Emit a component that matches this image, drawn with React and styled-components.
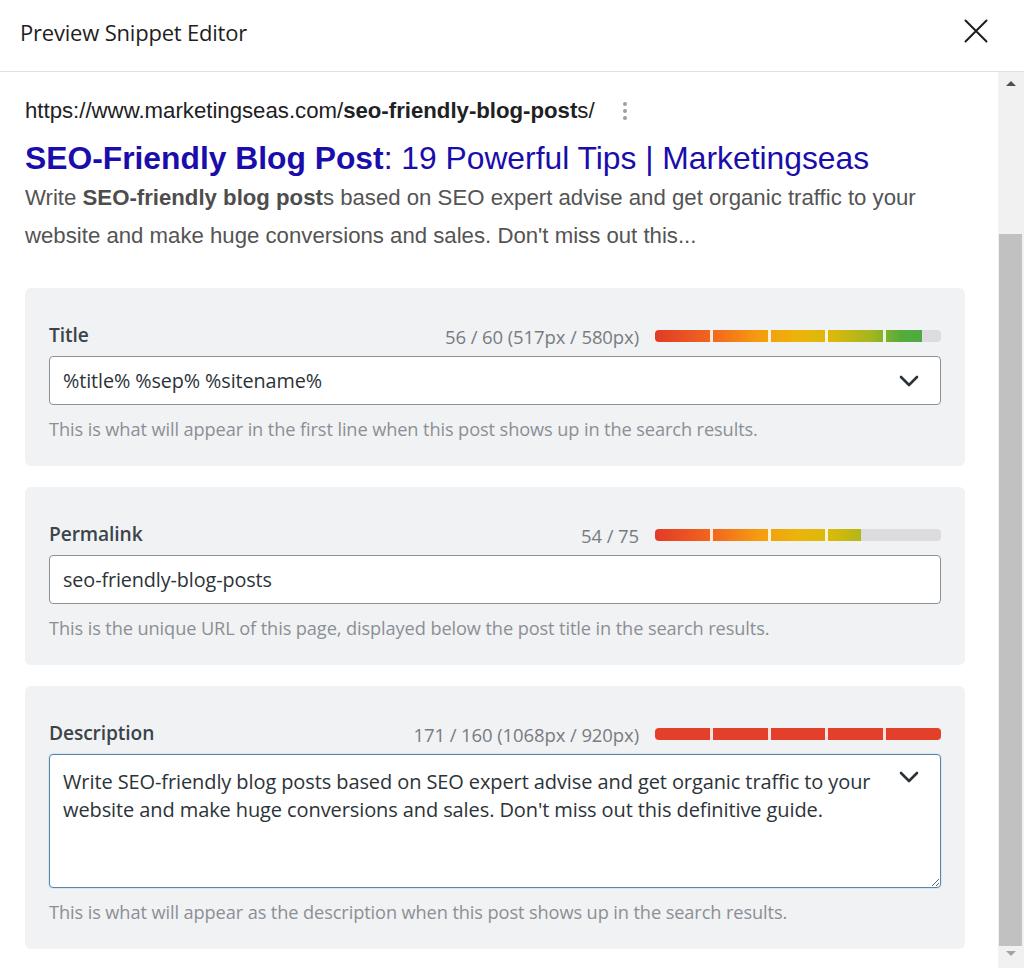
import styled, { createGlobalStyle } from 'styled-components';

const GlobalStyle = createGlobalStyle`
  html, body {
    margin: 0;
    padding: 0;
    background: #fff;
  }
  body {
    font-family: "Open Sans", "Noto Sans", sans-serif;
    color: #2c3338;
  }
  * {
    box-sizing: border-box;
  }
`;

const METER_WIDTH = 286;

const fields = [
  {
    id: 'title',
    label: 'Title',
    counter: '56 / 60 (517px / 580px)',
    value: 56,
    max: 60,
    text: '%title% %sep% %sitename%',
    help: 'This is what will appear in the first line when this post shows up in the search results.',
    chevron: true,
  },
  {
    id: 'permalink',
    label: 'Permalink',
    counter: '54 / 75',
    value: 54,
    max: 75,
    text: 'seo-friendly-blog-posts',
    help: 'This is the unique URL of this page, displayed below the post title in the search results.',
  },
  {
    id: 'description',
    label: 'Description',
    counter: '171 / 160 (1068px / 920px)',
    value: 171,
    max: 160,
    multiline: true,
    text: "Write SEO-friendly blog posts based on SEO expert advise and get organic traffic to your website and make huge conversions and sales. Don't miss out this definitive guide.",
    help: 'This is what will appear as the description when this post shows up in the search results.',
  },
];

const CloseIcon = () => (
  <svg width="24" height="24" viewBox="0 0 24 24" fill="none" stroke="#1e1e1e" strokeWidth="2" strokeLinecap="round">
    <path d="M1.5 1.5 L22.5 22.5 M22.5 1.5 L1.5 22.5" />
  </svg>
);

const Chevron = () => (
  <svg width="20" height="12" viewBox="0 0 20 12" fill="none" stroke="#2c3338" strokeWidth="2.6" strokeLinecap="round" strokeLinejoin="round">
    <path d="M2 2 L10 10 L18 2" />
  </svg>
);

const Meter = ({ value, max }) => {
  const over = value > max;
  const pct = Math.min(value / max, 1) * 100;
  return (
    <MeterTrack>
      <MeterFill $over={over} style={{ width: `${pct}%` }} />
    </MeterTrack>
  );
};

const FieldCard = ({ field }) => (
  <Card>
    <CardHeader>
      <FieldLabel>{field.label}</FieldLabel>
      <Counter>
        <CounterText>{field.counter}</CounterText>
        <Meter value={field.value} max={field.max} />
      </Counter>
    </CardHeader>
    {field.multiline ? (
      <TextAreaWrap>
        <TextArea readOnly value={field.text} />
        <AreaChevron>
          <Chevron />
        </AreaChevron>
      </TextAreaWrap>
    ) : (
      <InputBox>
        <span>{field.text}</span>
        {field.chevron && <Chevron />}
      </InputBox>
    )}
    <HelpText>{field.help}</HelpText>
  </Card>
);

const App = () => {
  return (
    <>
      <GlobalStyle />
      <Modal>
        <Header>
          <HeaderTitle>Preview Snippet Editor</HeaderTitle>
          <CloseButton aria-label="Close">
            <CloseIcon />
          </CloseButton>
        </Header>

        <Body>
          <Content>
            <Serp>
              <SerpUrl>
                https://www.marketingseas.com/<b>seo-friendly-blog-post</b>s/
                <MoreDots>
                  <i />
                  <i />
                  <i />
                </MoreDots>
              </SerpUrl>
              <SerpTitle>
                <b>SEO-Friendly Blog Post</b>: 19 Powerful Tips | Marketingseas
              </SerpTitle>
              <SerpDesc>
                Write <b>SEO-friendly blog post</b>s based on SEO expert advise and get organic traffic to your
                website and make huge conversions and sales. Don't miss out this...
              </SerpDesc>
            </Serp>

            <CardList>
              {fields.map((field) => (
                <FieldCard key={field.id} field={field} />
              ))}
            </CardList>
          </Content>

          <Scrollbar>
            <ScrollArrow $dir="up" />
            <ScrollThumb />
            <ScrollArrow $dir="down" />
          </Scrollbar>
        </Body>
      </Modal>
    </>
  );
};

export default App;

const Modal = styled.div`
  display: flex;
  flex-direction: column;
  width: 1024px;
  height: 968px;
  overflow: hidden;
  background: #fff;
`;

const Header = styled.header`
  display: flex;
  align-items: center;
  justify-content: space-between;
  height: 72px;
  flex-shrink: 0;
  padding: 0 36px 0 20px;
  border-bottom: 1px solid #e0e0e0;
`;

const HeaderTitle = styled.h1`
  margin: 0 0 8px;
  font-size: 22px;
  font-weight: 400;
  color: #1e1e1e;
  letter-spacing: -0.2px;
`;

const CloseButton = styled.button`
  display: flex;
  padding: 0;
  margin-bottom: 9px;
  border: none;
  background: none;
  cursor: pointer;
`;

const Body = styled.div`
  display: flex;
  flex: 1;
  min-height: 0;
`;

const Content = styled.div`
  flex: 1;
  padding: 27px 33px 0 25px;
`;

const Serp = styled.div`
  font-family: "Liberation Sans", Arial, sans-serif;
`;

const SerpUrl = styled.div`
  display: flex;
  align-items: center;
  height: 24px;
  font-size: 22.2px;
  line-height: 24px;
  color: #202124;
  white-space: pre;

  b {
    font-weight: 700;
  }
`;

const MoreDots = styled.span`
  display: inline-flex;
  flex-direction: column;
  gap: 3px;
  margin-left: 28px;

  i {
    display: block;
    width: 4px;
    height: 4px;
    border-radius: 50%;
    background: #9aa0a6;
  }
`;

const SerpTitle = styled.div`
  margin-top: 17px;
  font-size: 31.8px;
  line-height: 36px;
  color: #1a0dab;
  white-space: nowrap;

  b {
    font-weight: 700;
  }
`;

const SerpDesc = styled.p`
  margin: 3px 0 0;
  width: 920px;
  font-size: 22.2px;
  line-height: 38px;
  color: #545454;

  b {
    font-weight: 700;
    color: #4d4d4d;
  }
`;

const CardList = styled.div`
  display: flex;
  flex-direction: column;
  gap: 21px;
  margin-top: 33px;
`;

const Card = styled.section`
  background: #f0f2f4;
  border-radius: 6px;
  padding: 34px 24px 26px;
`;

const CardHeader = styled.div`
  display: flex;
  align-items: center;
  justify-content: space-between;
  height: 24px;
`;

const FieldLabel = styled.label`
  font-size: 19.2px;
  font-weight: 600;
  color: #3c434a;
  letter-spacing: -0.1px;
`;

const Counter = styled.div`
  display: flex;
  align-items: center;
  gap: 16px;
  margin-top: 4px;
`;

const CounterText = styled.span`
  font-size: 18.5px;
  color: #787c82;
  letter-spacing: -0.1px;
`;

const MeterTrack = styled.div`
  width: ${METER_WIDTH}px;
  height: 12px;
  border-radius: 4px;
  background: #dcdcde;
  overflow: hidden;
`;

const MeterFill = styled.div`
  height: 100%;
  background-image:
    repeating-linear-gradient(
      to right,
      transparent 0 54.8px,
      rgba(255, 255, 255, 0.85) 54.8px 57.8px
    ),
    ${({ $over }) =>
      $over
        ? 'linear-gradient(#e2402b, #e2402b)'
        : 'linear-gradient(to right, #e23a28 0%, #f36c1c 22%, #f59b10 36%, #ecb40a 50%, #d9b90c 62%, #a3b61f 76%, #55ac3c 86%, #45a845 100%)'};
  background-size: auto, ${METER_WIDTH}px 100%;
  background-repeat: no-repeat;
`;

const InputBox = styled.div`
  display: flex;
  align-items: center;
  justify-content: space-between;
  height: 49px;
  margin-top: 10px;
  padding: 0 21px 0 13px;
  background: #fff;
  border: 1px solid #8c8f94;
  border-radius: 4px;
  font-size: 19.8px;
  color: #2c3338;
  letter-spacing: -0.1px;
`;

const TextAreaWrap = styled.div`
  position: relative;
  margin-top: 10px;
`;

const TextArea = styled.textarea`
  display: block;
  width: 100%;
  height: 134px;
  padding: 13px 50px 12px 13px;
  border: 1px solid #5a87a5;
  border-radius: 4px;
  box-shadow: 0 0 0 1px #d6e6f2;
  background: #fff;
  font-family: "Open Sans", "Noto Sans", sans-serif;
  font-size: 20px;
  line-height: 28px;
  letter-spacing: -0.1px;
  color: #2c3338;
  outline: none;
  resize: vertical;
`;

const AreaChevron = styled.span`
  position: absolute;
  top: 17px;
  right: 22px;
  display: flex;
`;

const HelpText = styled.p`
  margin: 13px 0 0;
  font-size: 18.2px;
  line-height: 22px;
  color: #8c8f94;
  letter-spacing: -0.1px;
`;

const Scrollbar = styled.div`
  display: flex;
  flex-direction: column;
  align-items: center;
  width: 26px;
  flex-shrink: 0;
  background: #f1f1f1;
`;

const ScrollArrow = styled.div`
  display: flex;
  align-items: center;
  justify-content: center;
  width: 100%;
  height: ${({ $dir }) => ($dir === 'up' ? '24px' : '20px')};
  margin-top: ${({ $dir }) => ($dir === 'up' ? '0' : '2px')};

  &::after {
    content: '';
    width: 0;
    height: 0;
    border-left: 5px solid transparent;
    border-right: 5px solid transparent;
    ${({ $dir }) =>
      $dir === 'up'
        ? 'border-bottom: 5px solid #505050;'
        : 'border-top: 5px solid #a3a3a3; margin-top: -10px;'}
  }
`;

const ScrollThumb = styled.div`
  width: 23px;
  height: 720px;
  margin-top: 138px;
  margin-left: -1px;
  background: #c1c1c1;
`;
